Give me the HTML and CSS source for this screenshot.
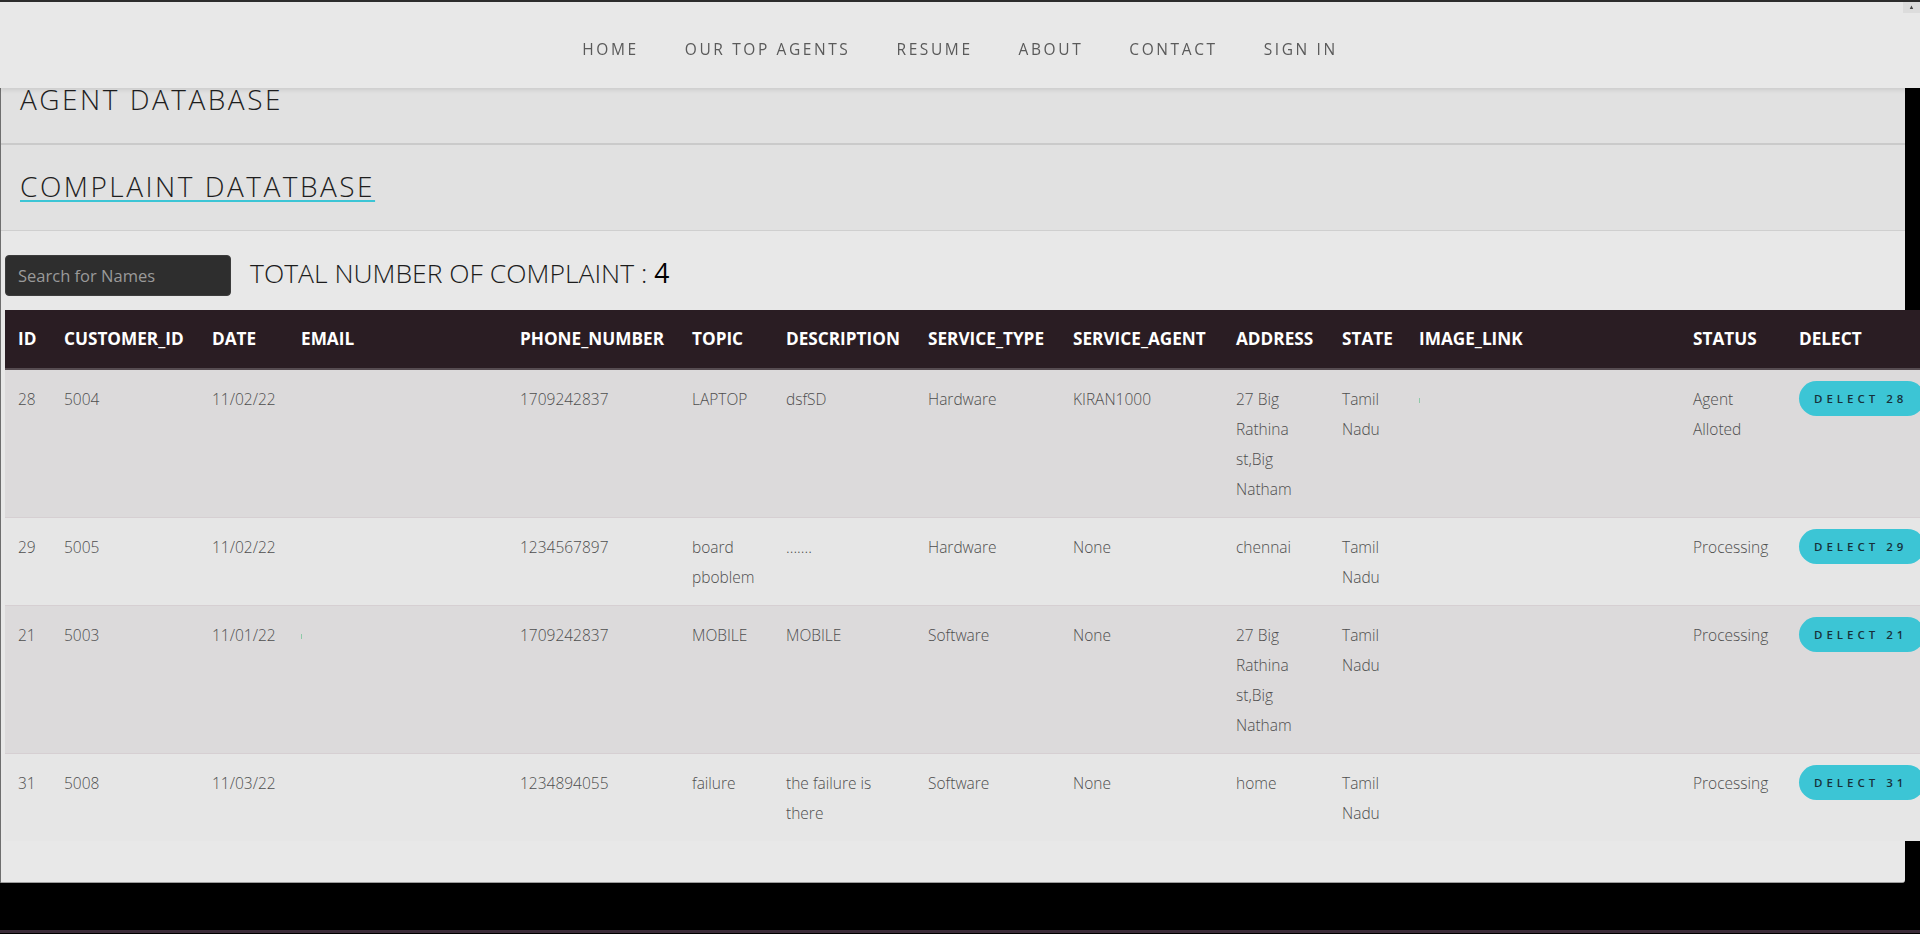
FILE: index.html
```html
<!DOCTYPE html>
<html lang="en">
<head>
<meta charset="utf-8">
<title>Complaint Database</title>
<link rel="stylesheet" href="styles.css">
</head>
<body>
<nav class="topnav">
  <a href="#">HOME</a>
  <a href="#">OUR TOP AGENTS</a>
  <a href="#">RESUME</a>
  <a href="#">ABOUT</a>
  <a href="#">CONTACT</a>
  <a href="#">SIGN IN</a>
  <span class="scroll-arrow">&#9650;</span>
</nav>

<main class="page">
  <div class="band band-agent">
    <h2 class="band-title">AGENT DATABASE</h2>
  </div>
  <div class="band band-complaint">
    <h2 class="band-title"><a href="#" class="band-link">COMPLAINT DATATBASE</a></h2>
  </div>

  <div class="toolbar">
    <input class="search" type="text" placeholder="Search for Names">
    <div class="total">TOTAL NUMBER OF COMPLAINT : <span class="count">4</span></div>
  </div>

  <table class="grid">
    <colgroup>
      <col class="c-id"><col class="c-cust"><col class="c-date"><col class="c-email">
      <col class="c-phone"><col class="c-topic"><col class="c-desc"><col class="c-stype">
      <col class="c-sagent"><col class="c-addr"><col class="c-state"><col class="c-img">
      <col class="c-status"><col class="c-del">
    </colgroup>
    <thead>
      <tr>
        <th>ID</th><th>CUSTOMER_ID</th><th>DATE</th><th>EMAIL</th><th>PHONE_NUMBER</th>
        <th>TOPIC</th><th>DESCRIPTION</th><th>SERVICE_TYPE</th><th>SERVICE_AGENT</th>
        <th>ADDRESS</th><th>STATE</th><th>IMAGE_LINK</th><th>STATUS</th><th>DELECT</th>
      </tr>
    </thead>
    <tbody>
      <tr class="odd">
        <td>28</td><td>5004</td><td>11/02/22</td><td></td><td>1709242837</td>
        <td>LAPTOP</td><td>dsfSD</td><td>Hardware</td><td>KIRAN1000</td>
        <td>27 Big Rathina st,Big Natham</td><td>Tamil Nadu</td><td><span class="broken"></span></td>
        <td>Agent Alloted</td><td><button class="del">DELECT 28</button></td>
      </tr>
      <tr>
        <td>29</td><td>5005</td><td>11/02/22</td><td></td><td>1234567897</td>
        <td>board pboblem</td><td>.......</td><td>Hardware</td><td>None</td>
        <td>chennai</td><td>Tamil Nadu</td><td></td>
        <td>Processing</td><td><button class="del">DELECT 29</button></td>
      </tr>
      <tr class="odd">
        <td>21</td><td>5003</td><td>11/01/22</td><td><span class="broken"></span></td><td>1709242837</td>
        <td>MOBILE</td><td>MOBILE</td><td>Software</td><td>None</td>
        <td>27 Big Rathina st,Big Natham</td><td>Tamil Nadu</td><td></td>
        <td>Processing</td><td><button class="del">DELECT 21</button></td>
      </tr>
      <tr>
        <td>31</td><td>5008</td><td>11/03/22</td><td></td><td>1234894055</td>
        <td>failure</td><td>the failure is there</td><td>Software</td><td>None</td>
        <td>home</td><td>Tamil Nadu</td><td></td>
        <td>Processing</td><td><button class="del">DELECT 31</button></td>
      </tr>
    </tbody>
  </table>
</main>
<div class="under"></div>
<div class="bottom-line"></div>
</body>
</html>
```

FILE: styles.css
```css
html, body {
  margin: 0;
  padding: 0;
}
body {
  background: #000;
  width: 1920px;
  height: 934px;
  overflow: hidden;
  font-family: "Open Sans", "Liberation Sans", sans-serif;
}

/* top navigation (fixed, lies over the page) */
.topnav {
  position: fixed;
  top: 0;
  left: 0;
  width: 1920px;
  height: 88px;
  box-sizing: border-box;
  border-top: 2px solid #2c2c2c;
  padding-top: 8px;
  background: #e8e8e8;
  display: flex;
  justify-content: center;
  align-items: center;
  gap: 46px;
  box-shadow: 0 2px 4px rgba(0, 0, 0, 0.10);
  z-index: 10;
}
.topnav a {
  color: #5a5a5a;
  text-decoration: none;
  font-size: 15.5px;
  letter-spacing: 2.6px;
  font-weight: 400;
}
.scroll-arrow {
  position: absolute;
  top: 0;
  right: 0;
  width: 17px;
  height: 11px;
  background: #dcdcdc;
  color: #444;
  font-size: 6px;
  line-height: 11px;
  text-align: center;
}

/* page body */
.page {
  width: 1905px;
  box-sizing: border-box;
  background: #e8e8e8;
  border-left: 1px solid #6e6e6e;
  border-bottom: 1px solid #9c9c9c;
  border-bottom-right-radius: 3px;
  padding-top: 58px;
  padding-bottom: 41px;
}

.band {
  height: 85px;
  box-sizing: border-box;
  background: #e1e1e1;
  display: flex;
  align-items: center;
  padding-left: 19px;
  padding-bottom: 4px;
}
.band-agent {
  border-bottom: 2px solid #cacaca;
  height: 87px;
}
.band-complaint {
  border-bottom: 1px solid #cfcfcf;
  height: 86px;
}
.band-title {
  margin: 0;
  font-size: 28px;
  font-weight: 300;
  letter-spacing: 2.5px;
  color: #1e1e1e;
  line-height: 36px;
}
.band-link {
  color: #1e1e1e;
  text-decoration: underline;
  text-decoration-color: #3cc5d5;
  text-decoration-thickness: 2px;
  text-underline-offset: 3px;
}

/* search + total */
.toolbar {
  display: flex;
  align-items: center;
  padding: 24px 0 14px 4px;
}
.search {
  width: 226px;
  height: 41px;
  box-sizing: border-box;
  background: #2e2e2e;
  border: 1px solid #3c3c3c;
  border-radius: 4px;
  padding: 0 12px;
  font-family: "Open Sans", "Liberation Sans", sans-serif;
  font-size: 16.5px;
  color: #ddd;
  outline: none;
}
.search::placeholder {
  color: #9a9a9a;
}
.total {
  margin-left: 19px;
  margin-bottom: 6px;
  font-size: 26.5px;
  font-weight: 300;
  color: #1c1c1c;
  line-height: 34px;
}
.count {
  font-weight: 400;
  color: #000;
}

/* table */
.grid {
  margin-left: 4px;
  width: 1933px;
  table-layout: fixed;
  border-collapse: collapse;
}
.c-id { width: 46px; }
.c-cust { width: 148px; }
.c-date { width: 89px; }
.c-email { width: 219px; }
.c-phone { width: 172px; }
.c-topic { width: 94px; }
.c-desc { width: 142px; }
.c-stype { width: 145px; }
.c-sagent { width: 163px; }
.c-addr { width: 106px; }
.c-state { width: 77px; }
.c-img { width: 274px; }
.c-status { width: 106px; }
.c-del { width: 152px; }

.grid thead tr {
  background: #2a1d23;
}
.grid th {
  text-align: left;
  color: #fff;
  font-weight: 700;
  font-size: 17.2px;
  line-height: 24px;
  padding: 17px 13px;
  white-space: nowrap;
  border-bottom: 2px solid #564c51;
}
.grid td {
  vertical-align: top;
  padding: 14px 13px 13px;
  font-size: 15.5px;
  font-weight: 300;
  line-height: 30px;
  color: #4e4e4e;
  border-top: 1px solid #d6cfd2;
}
.grid tbody tr {
  background: #e6e6e6;
}
.grid tbody tr.odd {
  background: #dcdadb;
}
.broken {
  display: inline-block;
  width: 1px;
  height: 5px;
  background: #8fc9a8;
  vertical-align: middle;
}
.del {
  display: block;
  margin-top: -3px;
  height: 35px;
  width: 126px;
  border: none;
  border-radius: 18px;
  background: #3cc5d5;
  color: #17313a;
  font-family: "Open Sans", "Liberation Sans", sans-serif;
  font-size: 11.5px;
  font-weight: 600;
  letter-spacing: 4px;
  text-align: left;
  padding: 0 0 0 15px;
  white-space: nowrap;
}

.under {
  height: 47px;
}
.bottom-line {
  height: 3px;
  background: #3b2c39;
}
```
